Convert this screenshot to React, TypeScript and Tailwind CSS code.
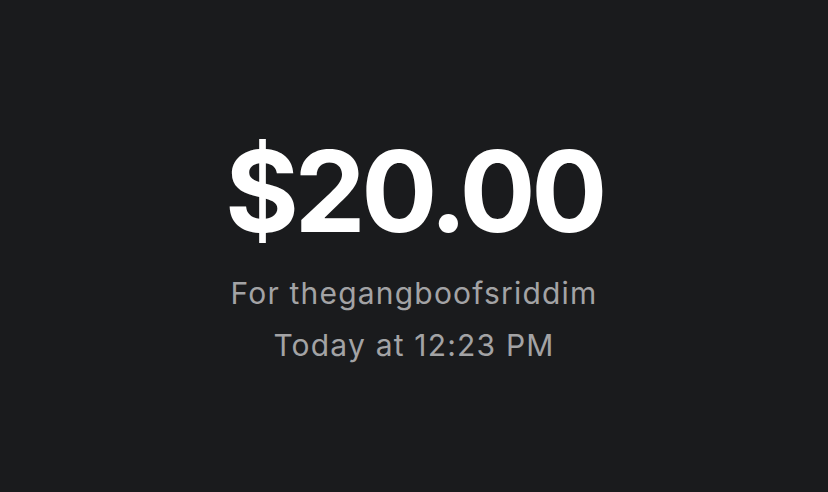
export default function App() {
  return (
    <div className="w-[828px] h-[492px] bg-[#1a1b1d] flex flex-col items-center" style={{ fontFamily: "Inter, 'Noto Sans', sans-serif" }}>
      <div className="mt-[121px] text-white font-bold text-[113px] leading-[140px] tracking-[-4.5px]">$20.00</div>
      <div className="mt-[6px] text-[#a3a3a5] text-[30px] leading-[52px] tracking-[1.2px]">For thegangboofsriddim</div>
      <div className="text-[#a3a3a5] text-[30px] leading-[52px] tracking-[1.2px]">Today at 12:23 PM</div>
    </div>
  );
}
